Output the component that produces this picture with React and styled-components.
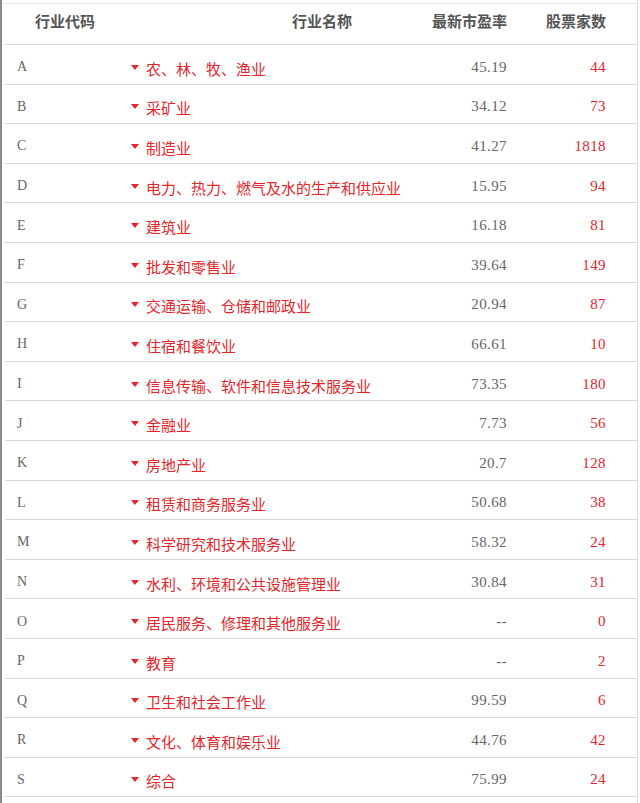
import React from "react";
import styled, { createGlobalStyle } from "styled-components";

const GlobalStyle = createGlobalStyle`
	html, body {
		margin: 0;
		padding: 0;
		background: #fff;
	}
	body {
		font-family: "Noto Sans CJK SC", "Noto Sans", sans-serif;
	}
`;

const rows = [
	["A", "农、林、牧、渔业", "45.19", "44"],
	["B", "采矿业", "34.12", "73"],
	["C", "制造业", "41.27", "1818"],
	["D", "电力、热力、燃气及水的生产和供应业", "15.95", "94"],
	["E", "建筑业", "16.18", "81"],
	["F", "批发和零售业", "39.64", "149"],
	["G", "交通运输、仓储和邮政业", "20.94", "87"],
	["H", "住宿和餐饮业", "66.61", "10"],
	["I", "信息传输、软件和信息技术服务业", "73.35", "180"],
	["J", "金融业", "7.73", "56"],
	["K", "房地产业", "20.7", "128"],
	["L", "租赁和商务服务业", "50.68", "38"],
	["M", "科学研究和技术服务业", "58.32", "24"],
	["N", "水利、环境和公共设施管理业", "30.84", "31"],
	["O", "居民服务、修理和其他服务业", "--", "0"],
	["P", "教育", "--", "2"],
	["Q", "卫生和社会工作业", "99.59", "6"],
	["R", "文化、体育和娱乐业", "44.76", "42"],
	["S", "综合", "75.99", "24"],
];

const Page = styled.div`
		width: 635px;
		height: 803px;
		border-left: 2px solid #8c8c8c;
		border-right: 1px solid #dedede;
		padding-top: 3px;
		box-sizing: content-box;
	`,
	Table = styled.div`
		border-top: 1px solid #e6e6e6;
		padding-left: 3px;
	`,
	Row = styled.div`
		display: grid;
		grid-template-columns: 120px 290px 100px 1fr;
		height: ${(p) => (p.$head ? "40px" : "38.6px")};
		border-bottom: 1px solid #d9d9d9;
	`,
	HeadCell = styled.div`
		display: flex;
		align-items: center;
		justify-content: ${(p) => p.$justify || "flex-start"};
		padding: 0 ${(p) => p.$right || 0}px 8px ${(p) => p.$left || 0}px;
		font-size: 15px;
		font-weight: 700;
		color: #555;
		white-space: nowrap;
	`,
	CodeCell = styled.div`
		display: flex;
		align-items: center;
		padding: 6px 0 0 12px;
		font-family: "Liberation Serif", serif;
		font-size: 14px;
		color: #666;
	`,
	NameCell = styled.div`
		display: flex;
		align-items: center;
		gap: 7px;
		padding: 8px 0 0 6px;
		font-size: 15px;
		color: #e4262b;
		white-space: nowrap;
	`,
	Arrow = styled.span`
		width: 0;
		height: 0;
		border-left: 4px solid transparent;
		border-right: 4px solid transparent;
		border-top: 5px solid #e4262b;
		margin-top: -2px;
	`,
	NumCell = styled.div`
		display: flex;
		align-items: center;
		justify-content: flex-end;
		padding: 6px ${(p) => p.$right}px 0 0;
		font-family: "Liberation Serif", serif;
		font-size: 15px;
		letter-spacing: 0.4px;
		color: ${(p) => (p.$red ? "#e4262b" : "#666")};
	`;

const App = () => {
	return (
		<Page>
			<GlobalStyle />
			<Table>
				<Row $head>
					<HeadCell $justify="center">行业代码</HeadCell>
					<HeadCell $left={167}>行业名称</HeadCell>
					<HeadCell $justify="flex-end" $right={8}>最新市盈率</HeadCell>
					<HeadCell $justify="flex-end" $right={31}>股票家数</HeadCell>
				</Row>
				{rows.map(([code, name, pe, count]) => (
					<Row key={code}>
						<CodeCell>{code}</CodeCell>
						<NameCell>
							<Arrow />
							{name}
						</NameCell>
						<NumCell $right={8}>{pe}</NumCell>
						<NumCell $right={31} $red>{count}</NumCell>
					</Row>
				))}
			</Table>
		</Page>
	);
};

export default App;
